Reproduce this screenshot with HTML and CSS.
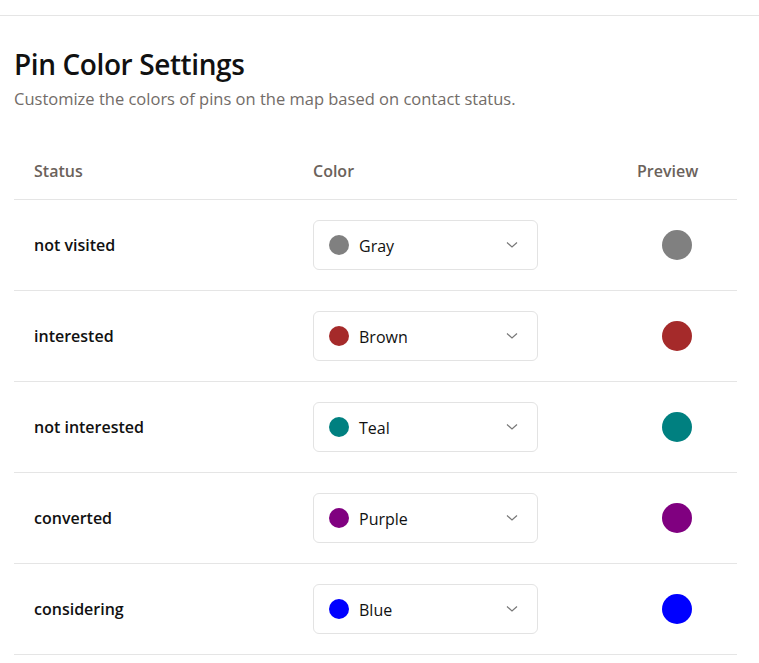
FILE: index.html
```html
<!DOCTYPE html>
<html>
<head>
<meta charset="utf-8">
<link rel="stylesheet" href="styles.css">
</head>
<body>
<div class="topbar"></div>
<main class="page">
  <h1 class="title">Pin Color Settings</h1>
  <p class="subtitle">Customize the colors of pins on the map based on contact status.</p>
  <div class="table">
    <div class="row head">
      <div class="cell">Status</div>
      <div class="cell">Color</div>
      <div class="cell">Preview</div>
    </div>
    <div class="row">
      <div class="cell status">not visited</div>
      <div class="cell"><div class="select"><span class="dot gray"></span><span class="label">Gray</span><svg class="chev" width="12" height="8" viewBox="0 0 12 8"><path d="M1 1.5 L6 6 L11 1.5" fill="none" stroke="#777" stroke-width="1.2"/></svg></div></div>
      <div class="cell preview"><span class="pin gray"></span></div>
    </div>
    <div class="row">
      <div class="cell status">interested</div>
      <div class="cell"><div class="select"><span class="dot brown"></span><span class="label">Brown</span><svg class="chev" width="12" height="8" viewBox="0 0 12 8"><path d="M1 1.5 L6 6 L11 1.5" fill="none" stroke="#777" stroke-width="1.2"/></svg></div></div>
      <div class="cell preview"><span class="pin brown"></span></div>
    </div>
    <div class="row">
      <div class="cell status">not interested</div>
      <div class="cell"><div class="select"><span class="dot teal"></span><span class="label">Teal</span><svg class="chev" width="12" height="8" viewBox="0 0 12 8"><path d="M1 1.5 L6 6 L11 1.5" fill="none" stroke="#777" stroke-width="1.2"/></svg></div></div>
      <div class="cell preview"><span class="pin teal"></span></div>
    </div>
    <div class="row">
      <div class="cell status">converted</div>
      <div class="cell"><div class="select"><span class="dot purple"></span><span class="label">Purple</span><svg class="chev" width="12" height="8" viewBox="0 0 12 8"><path d="M1 1.5 L6 6 L11 1.5" fill="none" stroke="#777" stroke-width="1.2"/></svg></div></div>
      <div class="cell preview"><span class="pin purple"></span></div>
    </div>
    <div class="row">
      <div class="cell status">considering</div>
      <div class="cell"><div class="select"><span class="dot blue"></span><span class="label">Blue</span><svg class="chev" width="12" height="8" viewBox="0 0 12 8"><path d="M1 1.5 L6 6 L11 1.5" fill="none" stroke="#777" stroke-width="1.2"/></svg></div></div>
      <div class="cell preview"><span class="pin blue"></span></div>
    </div>
  </div>
</main>
</body>
</html>
```
FILE: styles.css
```css
* { box-sizing: border-box; }
html, body { margin: 0; padding: 0; background: #fff; }
body {
  font-family: "Open Sans", "Noto Sans", sans-serif;
  color: #111;
}
.topbar {
  height: 16px;
  border-bottom: 1px solid #e5e5e5;
}
.page {
  padding: 0 22px 0 14px;
}
.title {
  margin: 30px 0 0;
  font-size: 28px;
  line-height: 36px;
  font-weight: 600;
  letter-spacing: -0.4px;
}
.subtitle {
  margin: 6px 0 0;
  font-size: 16.5px;
  line-height: 22px;
  color: #726c68;
}
.table {
  margin-top: 32px;
  width: 723px;
}
.row {
  display: grid;
  grid-template-columns: 279px 324px 120px;
  align-items: center;
  height: 91px;
  border-bottom: 1px solid #e5e5e5;
}
.row.head {
  height: 58px;
  font-size: 16px;
  font-weight: 600;
  color: #6b625b;
}
.cell {
  padding: 0 20px;
}
.status {
  font-size: 16px;
  font-weight: 600;
  color: #111;
}
.select {
  display: flex;
  align-items: center;
  width: 225px;
  height: 50px;
  border: 1px solid #e3e3e3;
  border-radius: 6px;
  padding: 0 19px 0 15px;
}
.dot {
  width: 20px;
  height: 20px;
  border-radius: 50%;
  flex: none;
}
.label {
  margin-left: 10px;
  font-size: 16px;
  flex: 1;
  padding-top: 1px;
}
.chev { flex: none; }
.preview {
  display: flex;
  justify-content: center;
}
.pin {
  width: 30px;
  height: 30px;
  border-radius: 50%;
}
.gray { background: #808080; }
.brown { background: #a52a2a; }
.teal { background: #008080; }
.purple { background: #800080; }
.blue { background: #0000ff; }
```
